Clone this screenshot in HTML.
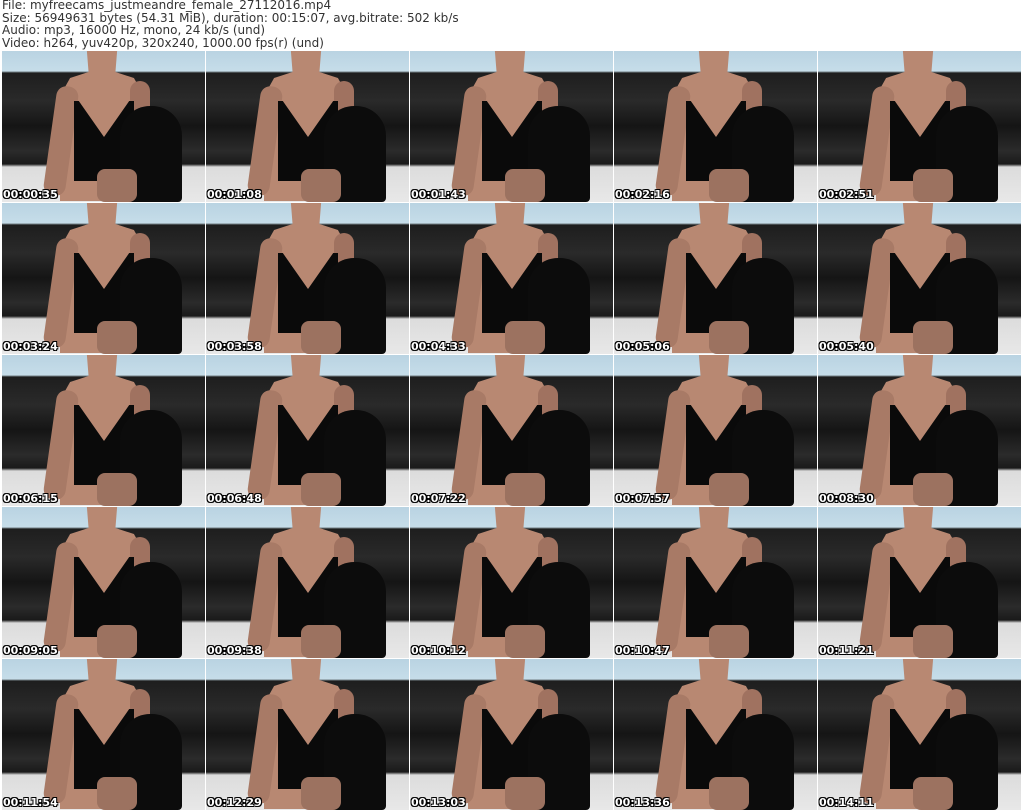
<!DOCTYPE html>
<html><head><meta charset="utf-8"><style>
body{margin:0;width:1024px;height:811px;background:#fff;position:relative;overflow:hidden;font-family:"DejaVu Sans","Liberation Sans",sans-serif}
.hd{position:absolute;left:2px;top:-1px;font-size:12px;line-height:12.6px;color:#333;white-space:pre}
.t{position:absolute;width:203px;height:151px;overflow:hidden;background:linear-gradient(#b9d3e2 0,#c6dde9 20px,#1e1e1e 22px,#2a2a2a 50px,#151515 75px,#2b2b2b 100px,#1a1a1a 113px,#dcdcdc 116px,#e8e8e8 151px)}
.t div{position:absolute}
.sk{left:58px;top:0;width:84px;height:150px;background:#b88872;clip-path:polygon(32% 0,68% 0,66% 14%,88% 18%,100% 30%,100% 100%,0 100%,0 30%,12% 18%,34% 14%)}
.ar{left:48px;top:35px;width:22px;height:110px;background:#a87a66;border-radius:10px;transform:rotate(8deg)}
.ar2{left:128px;top:30px;width:20px;height:70px;background:#a07260;border-radius:10px}
.bk{left:72px;top:50px;width:60px;height:80px;background:#0a0a0a;clip-path:polygon(0 0,8% 0,50% 45%,92% 0,100% 0,100% 100%,0 100%)}
.lg{left:118px;top:55px;width:62px;height:96px;background:#0c0c0c;border-radius:30px 30px 4px 4px}
.th{left:95px;top:118px;width:40px;height:33px;background:#9c7260;border-radius:8px}
.ts{left:1px;bottom:1px;color:#fff;font-weight:bold;font-size:11px;text-shadow:1px 1px 0 #000,-1px -1px 0 #000,1px -1px 0 #000,-1px 1px 0 #000}
</style></head><body>
<div class="hd">File: myfreecams_justmeandre_female_27112016.mp4
Size: 56949631 bytes (54.31 MiB), duration: 00:15:07, avg.bitrate: 502 kb/s
Audio: mp3, 16000 Hz, mono, 24 kb/s (und)
Video: h264, yuv420p, 320x240, 1000.00 fps(r) (und)</div>
<div id="g"></div>
<script>
var ts=["00:00:35","00:01:08","00:01:43","00:02:16","00:02:51","00:03:24","00:03:58","00:04:33","00:05:06","00:05:40","00:06:15","00:06:48","00:07:22","00:07:57","00:08:30","00:09:05","00:09:38","00:10:12","00:10:47","00:11:21","00:11:54","00:12:29","00:13:03","00:13:36","00:14:11"];
var h="";
for(var i=0;i<25;i++){var c=i%5,r=Math.floor(i/5);
h+='<div class="t" style="left:'+(2+c*204)+'px;top:'+(51+r*152)+'px"><div class="sk"></div><div class="ar"></div><div class="ar2"></div><div class="bk"></div><div class="lg"></div><div class="th"></div><div class="ts">'+ts[i]+'</div></div>';}
document.getElementById("g").innerHTML=h;
</script>
</body></html>
